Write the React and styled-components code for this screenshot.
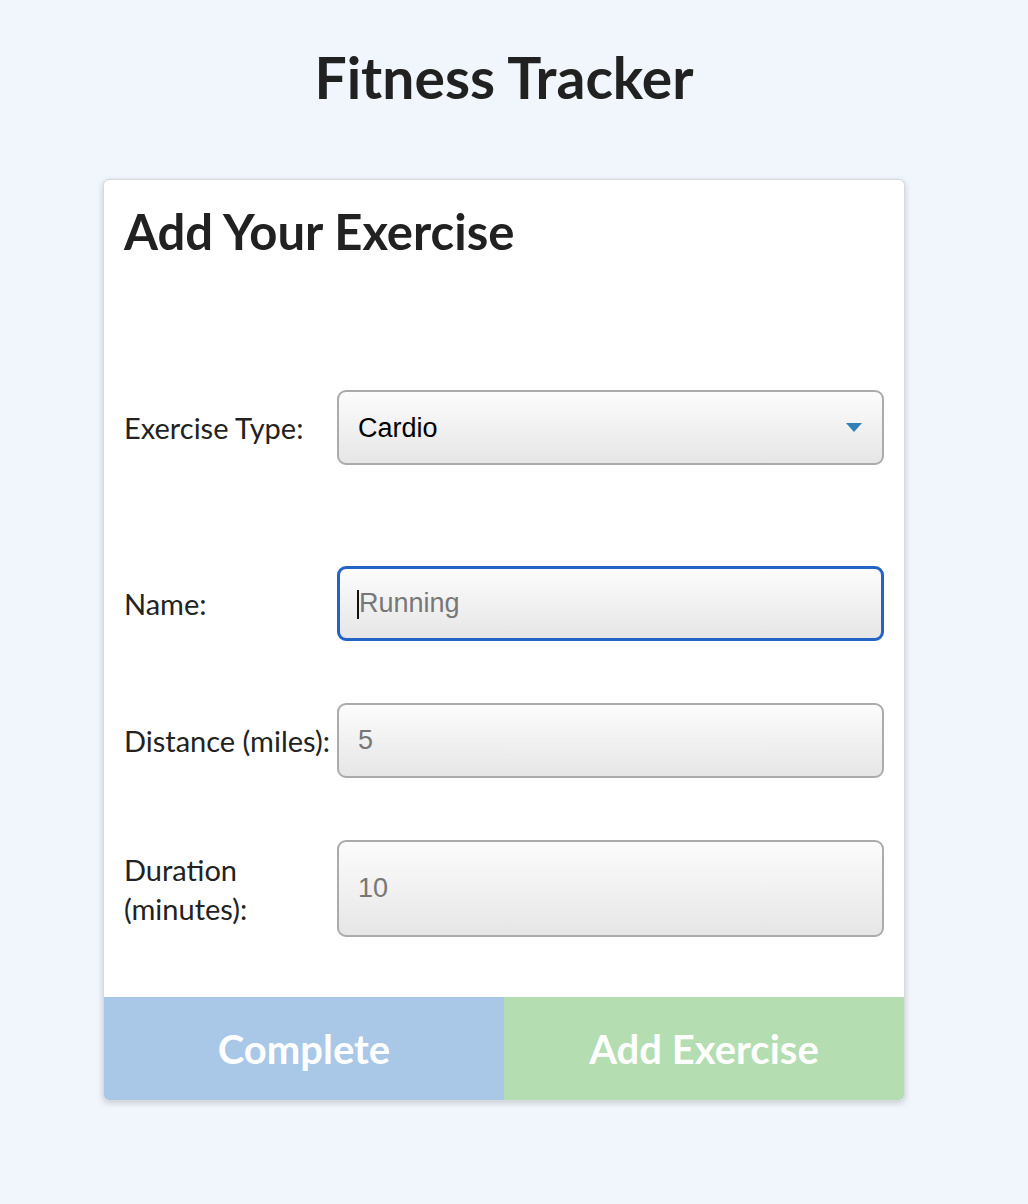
import React from 'react'
import styled, { createGlobalStyle } from 'styled-components'

const GlobalStyle = createGlobalStyle`
  html, body {
    margin: 0;
    padding: 0;
    background: #f1f6fd;
    font-family: Lato, "Open Sans", sans-serif;
    color: #212121;
  }
`

const Page = styled.div`
  width: 1008px;
  min-height: 1204px;
  display: flex;
  flex-direction: column;
  align-items: center;
`

const Title = styled.h1`
  margin: 42px 0 0;
  font-size: 57px;
  font-weight: 700;
  line-height: 70px;
`

const Card = styled.div`
  margin-top: 67px;
  width: 800px;
  background: #fff;
  border: 1px solid #d9d9d9;
  border-radius: 6px;
  box-shadow: 0 2px 6px rgba(0, 0, 0, 0.18);
  overflow: hidden;
`

const Body = styled.div`
  padding: 20px 20px 60px;
`

const Heading = styled.h2`
  margin: 0;
  font-size: 49px;
  font-weight: 700;
  line-height: 62px;
`

const Row = styled.div`
  display: grid;
  grid-template-columns: 213px 1fr;
  align-items: center;
  margin-top: ${p => p.$top}px;
`

const Label = styled.label`
  font-size: 29px;
  line-height: 39px;
  color: #222;
`

const SelectWrap = styled.div`
  position: relative;
`

const Field = styled.input`
  box-sizing: border-box;
  width: 100%;
  height: ${p => (p.$tall ? 97 : 75)}px;
  padding: 0 19px;
  border: ${p => (p.$focused ? '3px solid #2463c6' : '2px solid #ababab')};
  border-radius: 9px;
  background: linear-gradient(#fcfcfc, #e6e6e6);
  font-family: "Liberation Sans", Arial, sans-serif;
  font-size: 27px;
  color: #111;
  outline: none;
  caret-color: #000;

  &::placeholder {
    color: #777;
  }
`

const Caret = styled.span`
  position: absolute;
  left: 20px;
  top: 24px;
  width: 2px;
  height: 29px;
  background: #111;
  pointer-events: none;
`

const Select = styled.select`
  box-sizing: border-box;
  width: 100%;
  height: 75px;
  padding: 0 19px;
  border: 2px solid #ababab;
  border-radius: 9px;
  background: linear-gradient(#fcfcfc, #e6e6e6);
  font-family: "Liberation Sans", Arial, sans-serif;
  font-size: 27px;
  color: #000;
  appearance: none;
  outline: none;
`

const Arrow = styled.span`
  position: absolute;
  right: 22px;
  top: 33px;
  width: 0;
  height: 0;
  border-left: 8px solid transparent;
  border-right: 8px solid transparent;
  border-top: 9px solid #2f7fb8;
  pointer-events: none;
`

const Actions = styled.div`
  display: flex;
`

const Action = styled.button`
  flex: 1;
  height: 103px;
  border: none;
  background: ${p => p.$bg};
  color: #fff;
  font-family: Lato, sans-serif;
  font-size: 40px;
  font-weight: 700;
  cursor: pointer;
`

const App = () => {
  return (
    <>
      <GlobalStyle />
      <Page>
        <Title>Fitness Tracker</Title>
        <Card>
          <Body>
            <Heading>Add Your Exercise</Heading>
            <Row $top={128}>
              <Label>Exercise Type:</Label>
              <SelectWrap>
                <Select defaultValue="cardio">
                  <option value="cardio">Cardio</option>
                  <option value="resistance">Resistance</option>
                </Select>
                <Arrow />
              </SelectWrap>
            </Row>
            <Row $top={101}>
              <Label>Name:</Label>
              <SelectWrap>
                <Field $focused placeholder="Running" />
                <Caret />
              </SelectWrap>
            </Row>
            <Row $top={62}>
              <Label>Distance (miles):</Label>
              <Field placeholder="5" />
            </Row>
            <Row $top={62}>
              <Label>Duration (minutes):</Label>
              <Field $tall placeholder="10" />
            </Row>
          </Body>
          <Actions>
            <Action $bg="#a9c8e8">Complete</Action>
            <Action $bg="#b4ddb2">Add Exercise</Action>
          </Actions>
        </Card>
      </Page>
    </>
  )
}

export default App
